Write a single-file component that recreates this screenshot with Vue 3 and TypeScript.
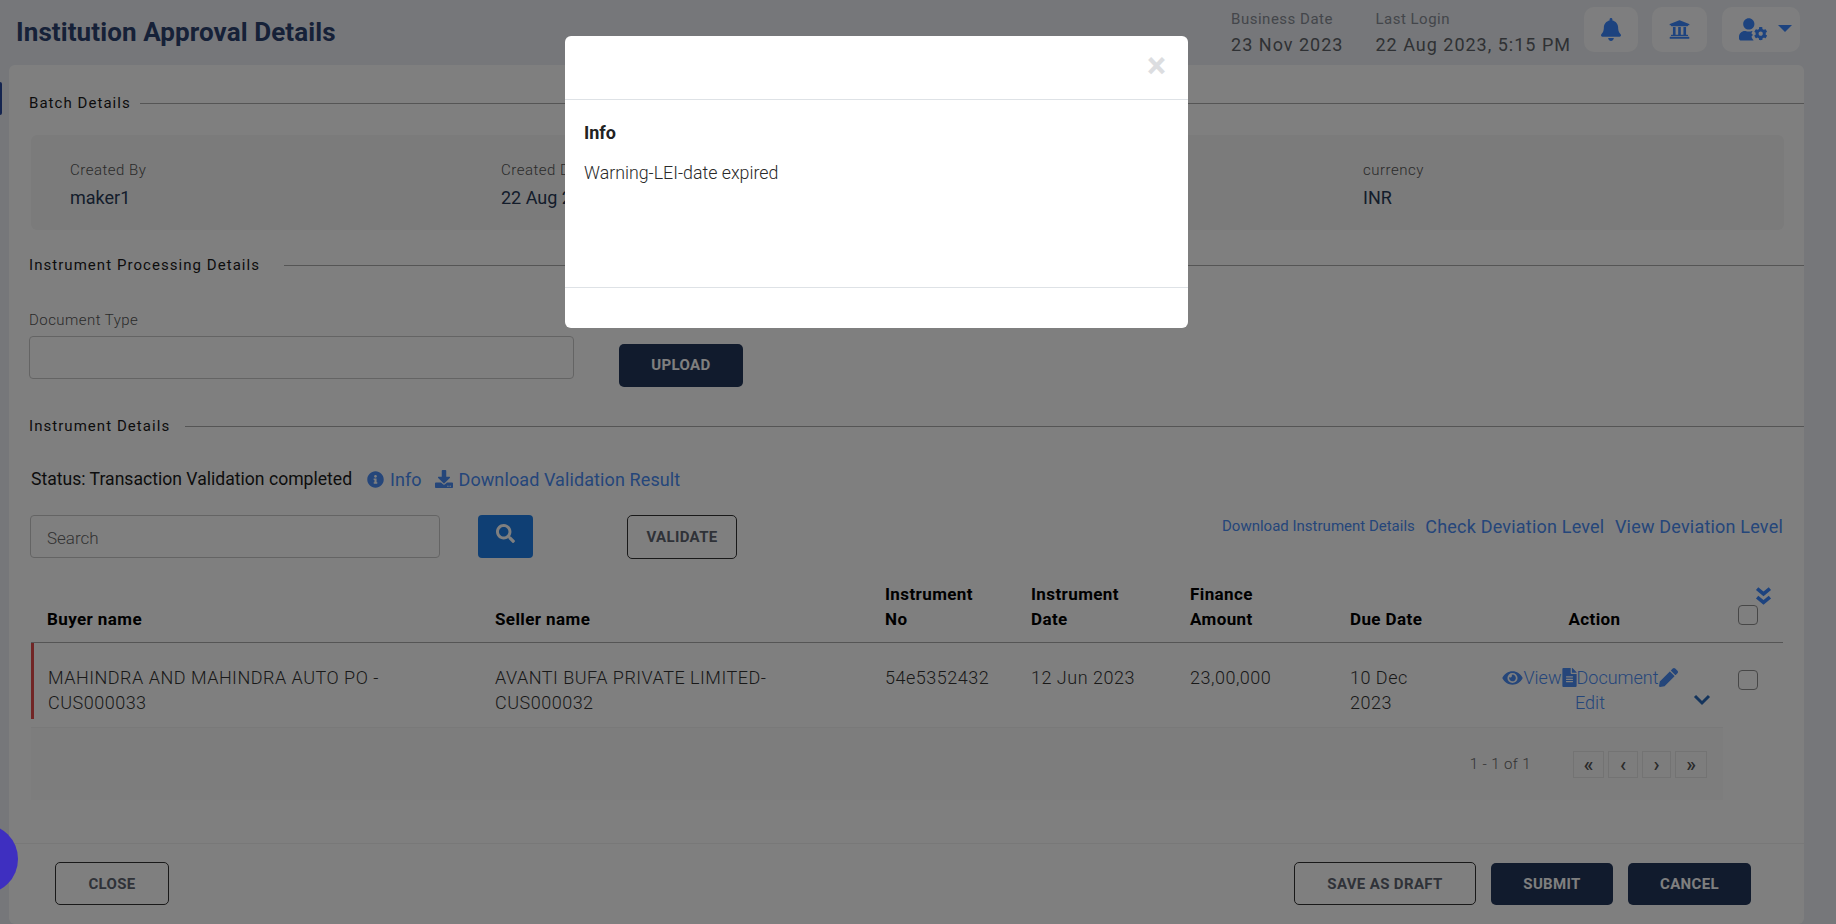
<script setup lang="ts">
const icons = {
  bell: 'M224 512c35.32 0 63.97-28.65 63.97-64H160.03c0 35.35 28.65 64 63.97 64zm215.39-149.71c-19.32-20.76-55.47-51.99-55.47-154.29 0-77.7-54.48-139.9-127.94-155.16V32c0-17.67-14.32-32-31.98-32s-31.98 14.33-31.98 32v20.84C118.56 68.1 64.08 130.3 64.08 208c0 102.3-36.15 133.53-55.47 154.29-6 6.45-8.66 14.16-8.61 21.71.11 16.4 12.98 32 32.1 32h383.8c19.12 0 32-15.6 32.1-32 .05-7.55-2.61-15.27-8.61-21.71z',
  bank: 'M496 128v16a8 8 0 0 1-8 8h-24v12c0 6.627-5.373 12-12 12H60c-6.627 0-12-5.373-12-12v-12H24a8 8 0 0 1-8-8v-16a8 8 0 0 1 4.941-7.392l232-88a7.996 7.996 0 0 1 6.118 0l232 88A8 8 0 0 1 496 128zm-24 304H40c-13.255 0-24 10.745-24 24v16a8 8 0 0 0 8 8h464a8 8 0 0 0 8-8v-16c0-13.255-10.745-24-24-24zM96 192v192H60c-6.627 0-12 5.373-12 12v20h416v-20c0-6.627-5.373-12-12-12h-36V192h-64v192h-64V192h-64v192h-64V192H96z',
  gear: 'M610.5 373.3c2.6-14.1 2.6-28.5 0-42.6l25.8-14.9c3-1.7 4.3-5.2 3.3-8.5-6.7-21.6-18.2-41.2-33.2-57.4-2.3-2.5-6-3.1-9-1.4l-25.8 14.9c-10.9-9.3-23.4-16.5-36.9-21.3v-29.8c0-3.4-2.4-6.4-5.7-7.1-22.3-5-45-4.8-66.2 0-3.3.7-5.7 3.7-5.7 7.1v29.8c-13.5 4.8-26 12-36.9 21.3l-25.8-14.9c-2.9-1.7-6.7-1.1-9 1.4-15 16.2-26.5 35.8-33.2 57.4-1 3.3.4 6.8 3.3 8.5l25.8 14.9c-2.6 14.1-2.6 28.5 0 42.6l-25.8 14.9c-3 1.7-4.3 5.2-3.3 8.5 6.7 21.6 18.2 41.1 33.2 57.4 2.3 2.5 6 3.1 9 1.4l25.8-14.9c10.9 9.3 23.4 16.5 36.9 21.3v29.8c0 3.4 2.4 6.4 5.7 7.1 22.3 5 45 4.8 66.2 0 3.3-.7 5.7-3.7 5.7-7.1v-29.8c13.5-4.8 26-12 36.9-21.3l25.8 14.9c2.9 1.7 6.7 1.1 9-1.4 15-16.2 26.5-35.8 33.2-57.4 1-3.3-.4-6.8-3.3-8.5l-25.8-14.9zM496 400.5c-26.8 0-48.5-21.8-48.5-48.5s21.8-48.5 48.5-48.5 48.5 21.8 48.5 48.5-21.7 48.5-48.5 48.5z',
  user: 'M224 256c70.7 0 128-57.3 128-128S294.7 0 224 0 96 57.3 96 128s57.3 128 128 128zM134 288h17c22 10 47 16 73 16s52-6 74-16h12c-8 12-18 30-22 46-3 12 2 24 13 30l14 8c-1 6-1 12 0 18l-14 8c-11 6-16 18-13 30 5 18 14 36 26 50 3 4 7 7 12 10 0 8 3 15 8 20H48c-26 0-48-22-48-48v-42c0-74 60-130 134-130z',
  eye: 'M572.52 241.4C518.29 135.59 410.93 64 288 64S57.68 135.64 3.48 241.41a32.35 32.35 0 0 0 0 29.19C57.71 376.41 165.07 448 288 448s230.32-71.64 284.52-177.41a32.35 32.35 0 0 0 0-29.19zM288 400a144 144 0 1 1 144-144 143.93 143.93 0 0 1-144 144zm0-240a95.31 95.31 0 0 0-25.31 3.79 47.85 47.85 0 0 1-66.9 66.9A95.78 95.78 0 1 0 288 160z',
  file: 'M224 136V0H24C10.7 0 0 10.7 0 24v464c0 13.3 10.7 24 24 24h336c13.3 0 24-10.7 24-24V160H248c-13.2 0-24-10.8-24-24zm64 236c0 6.6-5.4 12-12 12H108c-6.6 0-12-5.4-12-12v-8c0-6.6 5.4-12 12-12h168c6.6 0 12 5.4 12 12v8zm0-64c0 6.6-5.4 12-12 12H108c-6.6 0-12-5.4-12-12v-8c0-6.6 5.4-12 12-12h168c6.6 0 12 5.4 12 12v8zm0-72v8c0 6.6-5.4 12-12 12H108c-6.6 0-12-5.4-12-12v-8c0-6.6 5.4-12 12-12h168c6.6 0 12 5.4 12 12zm96-114.1v6.1H256V0h6.1c6.4 0 12.5 2.5 17 7l97.9 98c4.5 4.5 7 10.6 7 16.9z',
  pencil: 'M497.9 142.1l-46.1 46.1c-4.7 4.7-12.3 4.7-17 0l-111-111c-4.7-4.7-4.7-12.3 0-17l46.1-46.1c18.7-18.7 49.1-18.7 67.9 0l60.1 60.1c18.8 18.7 18.8 49.1 0 67.9zM284.2 99.8L21.6 362.4.4 483.9c-2.9 16.4 11.4 30.6 27.8 27.8l121.5-21.3 262.6-262.6c4.7-4.7 4.7-12.3 0-17l-111-111c-4.8-4.7-12.4-4.7-17.1 0z',
  search: 'M505 442.7L405.3 343c-4.5-4.5-10.6-7-17-7H372c27.6-35.3 44-79.7 44-128C416 93.1 322.9 0 208 0S0 93.1 0 208s93.1 208 208 208c48.3 0 92.7-16.4 128-44v16.3c0 6.4 2.5 12.5 7 17l99.7 99.7c9.4 9.4 24.6 9.4 33.9 0l28.3-28.3c9.4-9.4 9.4-24.6.1-34zM208 336c-70.7 0-128-57.2-128-128 0-70.7 57.2-128 128-128 70.7 0 128 57.2 128 128 0 70.7-57.2 128-128 128z',
  info: 'M256 8C119.043 8 8 119.083 8 256c0 136.997 111.043 248 248 248s248-111.003 248-248C504 119.083 392.957 8 256 8zm0 110c23.196 0 42 18.804 42 42s-18.804 42-42 42-42-18.804-42-42 18.804-42 42-42zm56 254c0 6.627-5.373 12-12 12h-88c-6.627 0-12-5.373-12-12v-24c0-6.627 5.373-12 12-12h12v-64h-12c-6.627 0-12-5.373-12-12v-24c0-6.627 5.373-12 12-12h64c6.627 0 12 5.373 12 12v100h12c6.627 0 12 5.373 12 12v24z',
  download: 'M216 0h80c13.3 0 24 10.7 24 24v168h87.7c17.8 0 26.7 21.5 14.1 34.1L269.7 378.3c-7.5 7.5-19.8 7.5-27.3 0L90.1 226.1c-12.6-12.6-3.7-34.1 14.1-34.1H192V24c0-13.3 10.7-24 24-24zm296 376v112c0 13.3-10.7 24-24 24H24c-13.3 0-24-10.7-24-24V376c0-13.3 10.7-24 24-24h146.7l49 49c20.1 20.1 52.5 20.1 72.6 0l49-49H488c13.3 0 24 10.7 24 24zm-124 88c0-11-9-20-20-20s-20 9-20 20 9 20 20 20 20-9 20-20zm64 0c0-11-9-20-20-20s-20 9-20 20 9 20 20 20 20-9 20-20z',
};

const batchFields = [
  { label: 'Created By', value: 'maker1' },
  { label: 'Created Date', value: '22 Aug 2023' },
  { label: '', value: '' },
  { label: 'currency', value: 'INR' },
];

const pageButtons = ['«', '‹', '›', '»'];
</script>

<template>
  <div class="page">
    <header class="topbar">
      <h1 class="page-title">Institution Approval Details</h1>
      <div class="topbar-info">
        <div class="info-item">
          <span class="info-label">Business Date</span>
          <span class="info-value">23 Nov 2023</span>
        </div>
        <div class="info-item">
          <span class="info-label">Last Login</span>
          <span class="info-value">22 Aug 2023, 5:15 PM</span>
        </div>
      </div>
      <div class="topbar-actions">
        <button class="icon-tile tile-bell">
          <svg width="20" height="23" viewBox="0 0 448 512"><path :d="icons.bell" /></svg>
        </button>
        <button class="icon-tile tile-bank">
          <svg width="21" height="21" viewBox="0 0 512 512"><path :d="icons.bank" /></svg>
        </button>
        <button class="icon-tile tile-user">
          <svg width="28" height="23" viewBox="0 0 640 512"><path :d="icons.user" /><path :d="icons.gear" /></svg>
          <span class="caret"></span>
        </button>
      </div>
    </header>

    <span class="side-marker"></span>

    <main class="card">
      <div class="card-body">
        <div class="section-title first">
          <span>Batch Details</span>
        </div>
        <div class="batch-panel">
          <div v-for="(field, i) in batchFields" :key="i" class="batch-field">
            <span class="field-label">{{ field.label }}</span>
            <span class="field-value">{{ field.value }}</span>
          </div>
        </div>

        <div class="section-title processing">
          <span>Instrument Processing Details</span>
        </div>
        <div class="doc-row">
          <label class="doc-field">
            <span class="doc-label">Document Type</span>
            <span class="doc-input"></span>
          </label>
          <button class="btn btn-dark btn-upload">UPLOAD</button>
        </div>

        <div class="section-title instruments">
          <span>Instrument Details</span>
        </div>
        <div class="status-row">
          <span class="status-text">Status: Transaction Validation completed</span>
          <a class="link status-info">
            <svg width="17" height="17" viewBox="0 0 512 512"><path :d="icons.info" /></svg>Info
          </a>
          <a class="link status-download">
            <svg width="18" height="18" viewBox="0 0 512 512"><path :d="icons.download" /></svg>Download Validation Result
          </a>
        </div>

        <div class="toolbar">
          <div class="search-input">Search</div>
          <button class="search-btn">
            <svg width="19" height="19" viewBox="0 0 512 512"><path :d="icons.search" /></svg>
          </button>
          <button class="btn btn-outline btn-validate">VALIDATE</button>
          <div class="toolbar-links">
            <a class="link link-small">Download Instrument Details</a>
            <a class="link link-wide">Check Deviation Level</a>
            <a class="link link-wide">View Deviation Level</a>
          </div>
        </div>

        <table class="grid">
          <colgroup>
            <col style="width: 448px" />
            <col style="width: 390px" />
            <col style="width: 146px" />
            <col style="width: 159px" />
            <col style="width: 160px" />
            <col style="width: 146px" />
            <col style="width: 220px" />
            <col style="width: 83px" />
          </colgroup>
          <thead>
            <tr>
              <th>Buyer name</th>
              <th>Seller name</th>
              <th>Instrument<br />No</th>
              <th>Instrument<br />Date</th>
              <th>Finance<br />Amount</th>
              <th>Due Date</th>
              <th class="col-action">Action</th>
              <th class="col-check">
                <svg class="expand-all" width="17" height="21" viewBox="0 0 16 19">
                  <path d="M2 2l6 5 6-5M2 10l6 5 6-5" fill="none" stroke-width="3.4" />
                </svg>
                <span class="checkbox"></span>
              </th>
            </tr>
          </thead>
          <tbody>
            <tr>
              <td class="flagged">MAHINDRA AND MAHINDRA AUTO PO -<br />CUS000033</td>
              <td>AVANTI BUFA PRIVATE LIMITED-<br />CUS000032</td>
              <td>54e5352432</td>
              <td>12 Jun 2023</td>
              <td>23,00,000</td>
              <td>10 Dec<br />2023</td>
              <td class="col-action">
                <a class="link action-link">
                  <svg width="21" height="18" viewBox="0 0 576 512"><path :d="icons.eye" /></svg>View<svg width="15" height="19" viewBox="0 0 384 512"><path :d="icons.file" /></svg>Document<svg width="19" height="19" viewBox="0 0 512 512"><path :d="icons.pencil" /></svg>
                </a>
                <a class="link action-link">Edit</a>
                <svg class="row-expand" width="18" height="12" viewBox="0 0 18 12">
                  <path d="M2 2l7 7 7-7" fill="none" stroke-width="3" />
                </svg>
              </td>
              <td class="col-check"><span class="checkbox"></span></td>
            </tr>
          </tbody>
        </table>

        <div class="pager">
          <span class="pager-range">1 - 1 of 1</span>
          <div class="pager-buttons">
            <button v-for="b in pageButtons" :key="b" class="pager-btn">{{ b }}</button>
          </div>
        </div>
      </div>

      <footer class="card-footer">
        <button class="btn btn-outline btn-close">CLOSE</button>
        <button class="btn btn-outline btn-draft">SAVE AS DRAFT</button>
        <button class="btn btn-dark btn-submit">SUBMIT</button>
        <button class="btn btn-dark btn-cancel">CANCEL</button>
      </footer>
    </main>

    <div class="backdrop"></div>

    <div class="modal">
      <div class="modal-header">
        <span class="modal-close">×</span>
      </div>
      <div class="modal-body">
        <h2 class="modal-title">Info</h2>
        <p class="modal-text">Warning-LEI-date expired</p>
      </div>
      <div class="modal-footer"></div>
    </div>

    <span class="chat-bubble"></span>
  </div>
</template>

<style>
html,
body {
  margin: 0;
  height: 100%;
  overflow: hidden;
}
</style>

<style scoped>
.page {
  position: relative;
  display: flex;
  flex-direction: column;
  height: 924px;
  background: #eceff4;
  font-family: Roboto, "Liberation Sans", sans-serif;
  color: #333;
  overflow: hidden;
}

svg {
  fill: currentColor;
  stroke: currentColor;
  stroke-width: 0;
  flex: none;
}

button {
  font-family: inherit;
  cursor: pointer;
}

.topbar {
  display: flex;
  align-items: flex-start;
  height: 65px;
  flex: none;
  padding-left: 16px;
}

.page-title {
  margin: 17px 0 0;
  font-size: 26px;
  line-height: 30px;
  font-weight: 700;
  color: #2c4270;
  letter-spacing: 0.1px;
}

.topbar-info {
  display: flex;
  gap: 32px;
  margin-left: auto;
  padding-top: 9px;
}

.info-item {
  display: flex;
  flex-direction: column;
}

.info-label {
  font-size: 15px;
  line-height: 20px;
  color: #888d96;
  letter-spacing: 0.5px;
}

.info-value {
  margin-top: 5px;
  font-size: 18px;
  line-height: 22px;
  color: #5f6368;
  letter-spacing: 1px;
}

.topbar-actions {
  display: flex;
  gap: 14px;
  margin: 7px 36px 0 13px;
}

.icon-tile {
  display: flex;
  align-items: center;
  justify-content: center;
  height: 45px;
  padding: 0;
  border: 0;
  border-radius: 10px;
  background: #fdfdfe;
  color: #3a86ff;
}

.tile-bell {
  width: 54px;
}

.tile-bank {
  width: 55px;
}

.tile-user {
  justify-content: flex-start;
  width: 78px;
  gap: 11px;
  margin-left: 1px;
  padding-left: 17px;
}

.caret {
  width: 0;
  height: 0;
  margin-bottom: 3px;
  border-left: 7px solid transparent;
  border-right: 7px solid transparent;
  border-top: 7px solid #3a86ff;
}

.side-marker {
  position: absolute;
  left: 0;
  top: 82px;
  width: 2px;
  height: 33px;
  border-radius: 0 2px 2px 0;
  background: #2a4aa0;
}

.card {
  display: flex;
  flex-direction: column;
  flex: 1;
  margin-left: 9px;
  width: 1795px;
  min-height: 0;
  border-radius: 6px;
  background: #fff;
}

.card-body {
  flex: 1;
  padding: 0 21px;
}

.section-title {
  display: flex;
  align-items: center;
  height: 22px;
  margin: 0 -21px 0 -1px;
  font-size: 15px;
  letter-spacing: 1.05px;
  color: #1a1a1a;
}

.section-title::after {
  content: "";
  flex: 1;
  height: 1px;
  background: #aaa;
}

.section-title.first {
  gap: 9px;
  margin-top: 27px;
}

.section-title.processing {
  gap: 24px;
  margin-top: 24px;
}

.section-title.instruments {
  gap: 15px;
  margin-top: 28px;
}

.batch-panel {
  display: grid;
  grid-template-columns: repeat(4, 431px);
  height: 95px;
  margin: 21px 0 0 1px;
  padding: 24px 0 0 39px;
  box-sizing: border-box;
  width: 1753px;
  border-radius: 6px;
  background: #f6f6f6;
}

.batch-field {
  display: flex;
  flex-direction: column;
}

.field-label {
  height: 22px;
  font-size: 15px;
  line-height: 22px;
  font-weight: 300;
  color: #555;
  letter-spacing: 0.5px;
}

.field-value {
  margin-top: 6px;
  font-size: 18px;
  line-height: 22px;
  color: #283a57;
}

.doc-row {
  display: flex;
  align-items: flex-start;
  margin-top: 34px;
}

.doc-field {
  display: flex;
  flex-direction: column;
  width: 545px;
  margin-left: -1px;
}

.doc-label {
  height: 20px;
  font-size: 15px;
  line-height: 20px;
  font-weight: 300;
  letter-spacing: 0.45px;
  color: #555;
}

.doc-input {
  height: 41px;
  margin-top: 6px;
  border: 1px solid #c9c9c9;
  border-radius: 4px;
}

.btn {
  font-weight: 700;
  font-size: 15px;
  border-radius: 5px;
  letter-spacing: 0.35px;
}

.btn-dark {
  border: 0;
  background: #22365a;
  color: #fff;
}

.btn-outline {
  border: 1px solid #333;
  background: transparent;
  color: #5e6470;
}

.btn-upload {
  width: 124px;
  height: 43px;
  margin: 34px 0 0 45px;
  padding-bottom: 2px;
}

.status-row {
  display: flex;
  align-items: center;
  height: 26px;
  margin-top: 29px;
  font-size: 17.6px;
}

.status-text {
  color: #1a1a1a;
  margin-left: 1px;
}

.link {
  display: inline-flex;
  align-items: center;
  color: #4a8cf5;
  white-space: nowrap;
  font-size: 18px;
}

.status-info {
  margin-left: 15px;
  gap: 6px;
}

.status-download {
  margin-left: 14px;
  gap: 5px;
  letter-spacing: 0.1px;
}

.toolbar {
  display: flex;
  align-items: flex-start;
  margin-top: 23px;
  height: 44px;
}

.search-input {
  box-sizing: border-box;
  width: 410px;
  height: 43px;
  padding-left: 16px;
  border: 1px solid #c9c9c9;
  border-radius: 4px;
  font-size: 17px;
  font-weight: 300;
  line-height: 44px;
  color: #666;
}

.search-btn {
  display: flex;
  justify-content: center;
  width: 55px;
  height: 43px;
  margin-left: 38px;
  padding: 9px 0 0;
  border: 0;
  border-radius: 4px;
  background: #1f7fe8;
  color: #fff;
}

.btn-validate {
  width: 110px;
  height: 44px;
  margin-left: 94px;
}

.toolbar-links {
  display: flex;
  align-items: center;
  gap: 10.5px;
  height: 22px;
  margin-left: auto;
}

.link-small {
  font-size: 15px;
}

.link-wide {
  letter-spacing: 0.2px;
}

.grid {
  width: 1752px;
  margin: 16px 0 0 1px;
  border-collapse: collapse;
  table-layout: fixed;
}

.grid th {
  padding: 7px 16px 10px;
  font-size: 17px;
  line-height: 25px;
  font-weight: 700;
  text-align: left;
  vertical-align: bottom;
  color: #000;
  border-bottom: 1px solid #aaa;
  letter-spacing: 0.4px;
}

.grid td {
  padding: 22px 16px 12px;
  font-size: 18px;
  line-height: 25px;
  font-weight: 300;
  vertical-align: top;
  color: #333;
  letter-spacing: 0.5px;
}

.grid .flagged {
  position: relative;
  padding-left: 17px;
}

.flagged::before {
  content: "";
  position: absolute;
  left: 0;
  top: 0;
  width: 3px;
  height: 76px;
  background: #e34b4b;
}

.grid th.col-action {
  padding: 7px 0 10px 9px;
  text-align: center;
}

.grid td.col-action {
  position: relative;
  padding: 22px 0 12px;
  text-align: center;
}

.grid .col-check {
  position: relative;
  padding: 0 0 0 38px;
}

.grid td.col-check {
  padding-top: 27px;
}

.action-link {
  display: flex;
  justify-content: center;
  height: 25px;
  letter-spacing: 0;
}

.expand-all {
  position: absolute;
  right: 11px;
  top: 11px;
  color: #3a86ff;
  stroke-width: 3.4;
}

.row-expand {
  position: absolute;
  right: -11px;
  top: 51px;
  color: #2968b8;
  stroke-width: 3;
}

.checkbox {
  display: block;
  box-sizing: border-box;
  width: 20px;
  height: 20px;
  border: 1px solid #8f8f8f;
  border-radius: 4px;
  margin-bottom: 6px;
}

th .checkbox {
  margin-bottom: 17px;
}

.pager {
  display: flex;
  align-items: center;
  justify-content: flex-end;
  box-sizing: border-box;
  width: 1692px;
  height: 73px;
  margin-left: 1px;
  padding: 0 16px 0 0;
  background: #fafafa;
  border-top: 1px solid #f3f3f3;
}

.pager-range {
  font-size: 15px;
  font-weight: 300;
  color: #666;
  letter-spacing: 0.4px;
}

.pager-buttons {
  display: flex;
  gap: 4px;
  margin-left: 42px;
}

.pager-btn {
  width: 31px;
  height: 27px;
  padding: 0;
  border: 1px solid #e6e6e6;
  background: #fafafa;
  font-size: 20px;
  line-height: 24px;
  font-weight: 500;
  color: #555;
}

.pager-btn:nth-child(2) {
  width: 30px;
}

.pager-btn:nth-child(3) {
  width: 29px;
}

.pager-btn:nth-child(4) {
  width: 32px;
}

.card-footer {
  display: flex;
  align-items: flex-start;
  height: 81px;
  flex: none;
  box-sizing: border-box;
  padding: 18px 53px 0 46px;
  border-top: 1px solid #f0f0f0;
}

.btn-close {
  width: 114px;
  height: 43px;
  margin-right: auto;
}

.btn-draft {
  width: 182px;
  height: 43px;
}

.btn-submit {
  width: 122px;
  height: 42px;
  margin: 1px 0 0 15px;
}

.btn-cancel {
  width: 123px;
  height: 42px;
  margin: 1px 0 0 15px;
}

.backdrop {
  position: absolute;
  inset: 0;
  background: rgba(0, 0, 0, 0.5);
}

.modal {
  position: absolute;
  left: 565px;
  top: 36px;
  display: flex;
  flex-direction: column;
  width: 623px;
  height: 292px;
  border-radius: 6px;
  background: #fff;
}

.modal-header {
  display: flex;
  justify-content: flex-end;
  height: 63px;
  flex: none;
  padding-right: 22px;
  border-bottom: 1px solid #dee2e6;
}

.modal-close {
  margin-top: 10px;
  font-size: 36px;
  line-height: 40px;
  font-weight: 700;
  color: #dcdde0;
}

.modal-body {
  flex: 1;
  padding: 21px 19px 0 20px;
}

.modal-title {
  margin: 0;
  margin-left: -1px;
  font-size: 18px;
  line-height: 24px;
  font-weight: 700;
  color: #222;
}

.modal-text {
  margin: 16px 0 0 -1px;
  font-size: 17.8px;
  line-height: 24px;
  font-weight: 300;
  color: #2a2a2a;
}

.modal-footer {
  height: 40px;
  flex: none;
  border-top: 1px solid #dee2e6;
}

.chat-bubble {
  position: absolute;
  left: -52px;
  top: 824px;
  width: 70px;
  height: 70px;
  border-radius: 50%;
  background: #3e2fc0;
}
</style>
